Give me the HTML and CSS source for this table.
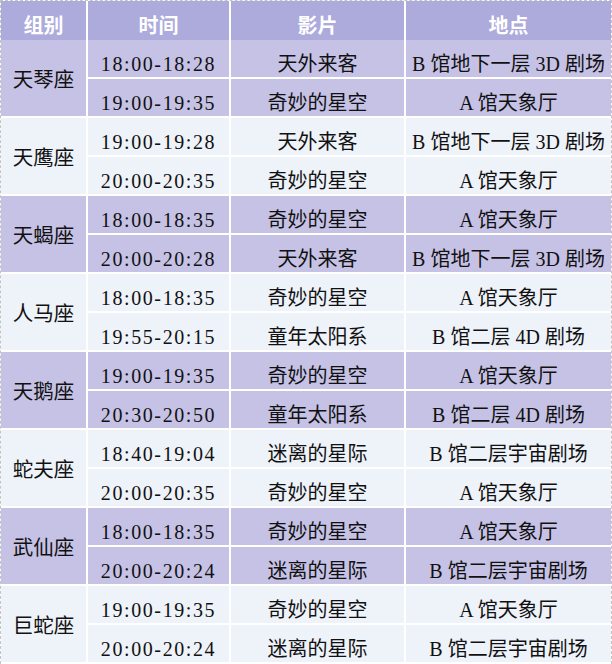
FILE: index.html
```html
<!DOCTYPE html>
<html lang="zh-CN">
<head>
<meta charset="utf-8">
<title>观影安排</title>
<link rel="stylesheet" href="styles.css">
</head>
<body>
<div class="frame">
<table class="schedule">
  <colgroup>
    <col class="c-group"><col class="c-time"><col class="c-film"><col class="c-place">
  </colgroup>
  <thead>
    <tr><th>组别</th><th>时间</th><th>影片</th><th class="last">地点</th></tr>
  </thead>
  <tbody>
    <tr class="purple"><td class="grp" rowspan="2">天琴座</td><td class="time">18:00-18:28</td><td>天外来客</td><td class="last">B 馆地下一层 3D 剧场</td></tr>
    <tr class="purple"><td class="time">19:00-19:35</td><td>奇妙的星空</td><td class="last">A 馆天象厅</td></tr>
    <tr class="light"><td class="grp" rowspan="2">天鹰座</td><td class="time">19:00-19:28</td><td>天外来客</td><td class="last">B 馆地下一层 3D 剧场</td></tr>
    <tr class="light"><td class="time">20:00-20:35</td><td>奇妙的星空</td><td class="last">A 馆天象厅</td></tr>
    <tr class="purple"><td class="grp" rowspan="2">天蝎座</td><td class="time">18:00-18:35</td><td>奇妙的星空</td><td class="last">A 馆天象厅</td></tr>
    <tr class="purple"><td class="time">20:00-20:28</td><td>天外来客</td><td class="last">B 馆地下一层 3D 剧场</td></tr>
    <tr class="light"><td class="grp" rowspan="2">人马座</td><td class="time">18:00-18:35</td><td>奇妙的星空</td><td class="last">A 馆天象厅</td></tr>
    <tr class="light"><td class="time">19:55-20:15</td><td>童年太阳系</td><td class="last">B 馆二层 4D 剧场</td></tr>
    <tr class="purple"><td class="grp" rowspan="2">天鹅座</td><td class="time">19:00-19:35</td><td>奇妙的星空</td><td class="last">A 馆天象厅</td></tr>
    <tr class="purple"><td class="time">20:30-20:50</td><td>童年太阳系</td><td class="last">B 馆二层 4D 剧场</td></tr>
    <tr class="light"><td class="grp" rowspan="2">蛇夫座</td><td class="time">18:40-19:04</td><td>迷离的星际</td><td class="last">B 馆二层宇宙剧场</td></tr>
    <tr class="light"><td class="time">20:00-20:35</td><td>奇妙的星空</td><td class="last">A 馆天象厅</td></tr>
    <tr class="purple"><td class="grp" rowspan="2">武仙座</td><td class="time">18:00-18:35</td><td>奇妙的星空</td><td class="last">A 馆天象厅</td></tr>
    <tr class="purple"><td class="time">20:00-20:24</td><td>迷离的星际</td><td class="last">B 馆二层宇宙剧场</td></tr>
    <tr class="light"><td class="grp" rowspan="2">巨蛇座</td><td class="time">19:00-19:35</td><td>奇妙的星空</td><td class="last">A 馆天象厅</td></tr>
    <tr class="light"><td class="time">20:00-20:24</td><td>迷离的星际</td><td class="last">B 馆二层宇宙剧场</td></tr>
  </tbody>
</table>
</div>
</body>
</html>
```
FILE: styles.css
```css
html, body {
  margin: 0;
  padding: 0;
  background: #ffffff;
}
.frame {
  width: 612px;
  box-sizing: border-box;
  border-top: 1px dashed #c4c4c4;
  border-left: 1px dashed #c4c4c4;
  border-right: 1px dashed #c4c4c4;
  overflow: hidden;
}
.schedule {
  width: 610px;
  table-layout: fixed;
  border-collapse: separate;
  border-spacing: 0;
  font-family: "Liberation Serif", "Noto Sans CJK SC", serif;
  font-size: 20px;
  color: #111;
}
.c-group { width: 87px; }
.c-time { width: 143px; }
.c-film { width: 175px; }
.c-place { width: 205px; }
.schedule th {
  height: 39px;
  box-sizing: border-box;
  padding: 8px 0 0 0;
  background: #adaadc;
  color: #ffffff;
  font-family: "Noto Sans CJK SC", sans-serif;
  font-weight: bold;
  font-size: 20px;
  line-height: 30px;
  text-align: center;
  vertical-align: middle;
  border-right: 2px solid #ffffff;
}
.schedule td {
  height: 39px;
  box-sizing: border-box;
  padding: 11px 0 0 0;
  line-height: 26px;
  text-align: center;
  vertical-align: middle;
  white-space: nowrap;
  border-right: 2px solid #ffffff;
  border-bottom: 2px solid #ffffff;
}
.schedule td.grp {
  padding-top: 3px;
  font-size: 20.5px;
}
.schedule .last {
  border-right: none;
}
.schedule td.time {
  letter-spacing: 1.6px;
}
.purple td { background: #c5c2e6; }
.light td { background: #eef2f9; }
```
